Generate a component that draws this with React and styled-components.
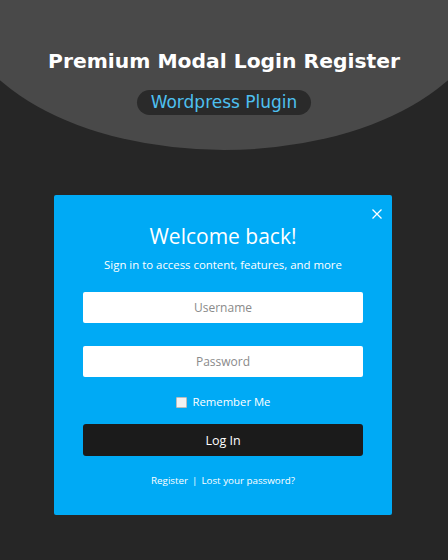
import React from 'react'
import styled, { createGlobalStyle } from 'styled-components'

const GlobalStyle = createGlobalStyle`
  html, body {
    margin: 0;
    padding: 0;
    background: #262626;
  }
  body {
    font-family: 'Open Sans', 'Liberation Sans', sans-serif;
  }
`

const Page = styled.div`
  width: 448px;
  height: 560px;
  overflow: hidden;
  background: #262626;
  display: flex;
  flex-direction: column;
  align-items: center;
`

const Hero = styled.header`
  flex: none;
  width: 530px;
  height: 150px;
  background: #494949;
  border-radius: 0 0 50% 50% / 0 0 100% 100%;
  display: flex;
  flex-direction: column;
  align-items: center;
  padding-top: 47px;
  box-sizing: border-box;
`

const Title = styled.h1`
  margin: 0;
  font-family: 'DejaVu Sans', 'Liberation Sans', sans-serif;
  font-weight: bold;
  font-size: 20.3px;
  line-height: 28px;
  color: #fff;
`

const Pill = styled.div`
  margin-top: 15px;
  height: 25px;
  padding: 0 14px;
  border-radius: 13px;
  background: #2a2a2a;
  color: #4ec0f0;
  font-family: 'DejaVu Sans', 'Liberation Sans', sans-serif;
  font-size: 17px;
  line-height: 25px;
`

const Modal = styled.div`
  align-self: flex-start;
  margin: 45px 0 0 54px;
  width: 338px;
  height: 320px;
  box-sizing: border-box;
  background: #00aaf5;
  border-radius: 2px;
  position: relative;
  display: flex;
  flex-direction: column;
  align-items: center;
  padding: 25px 29px 0;
  color: #fff;
`

const Close = styled.button`
  position: absolute;
  top: 12px;
  right: 8px;
  width: 14px;
  height: 14px;
  padding: 0;
  border: 0;
  background: none;
  cursor: pointer;
  svg {
    display: block;
  }
`

const Heading = styled.h2`
  margin: 0;
  font-weight: 400;
  font-size: 21px;
  line-height: 32px;
`

const Sub = styled.p`
  margin: 5px 0 0;
  font-size: 11.4px;
  line-height: 16px;
`

const Form = styled.form`
  width: 100%;
  display: flex;
  flex-direction: column;
  align-items: center;
  margin-top: 19px;
`

const Input = styled.input`
  width: 100%;
  height: 31px;
  box-sizing: border-box;
  border: 0;
  border-radius: 2px;
  background: #fff;
  margin-bottom: ${(p) => p.$gap}px;
  font-family: inherit;
  font-size: 12px;
  text-align: center;
  color: #333;
  &::placeholder {
    color: #8a8a8a;
  }
`

const Remember = styled.label`
  display: flex;
  align-items: center;
  gap: 6px;
  font-size: 11.3px;
  line-height: 16px;
`

const Box = styled.span`
  width: 9px;
  height: 9px;
  background: #f2f2f2;
  border: 1px solid #bdbdbd;
  border-radius: 1px;
`

const Submit = styled.button`
  margin-top: 14px;
  width: 100%;
  height: 32px;
  border: 0;
  border-radius: 3px;
  background: #1b1b1b;
  color: #fff;
  font-family: inherit;
  font-size: 12.5px;
  cursor: pointer;
`

const Links = styled.div`
  margin-top: 17px;
  font-size: 9.8px;
  line-height: 16px;
  a {
    color: #fff;
    text-decoration: none;
  }
  span {
    margin: 0 4px;
  }
`

export default function App() {
  return (
    <Page>
      <GlobalStyle />
      <Hero>
        <Title>Premium Modal Login Register</Title>
        <Pill>Wordpress Plugin</Pill>
      </Hero>
      <Modal>
        <Close aria-label='Close'>
          <svg width='14' height='14' viewBox='0 0 14 14'>
            <path d='M2.5 2.5 L11.5 11.5 M11.5 2.5 L2.5 11.5' stroke='#fff' strokeWidth='1.3' />
          </svg>
        </Close>
        <Heading>Welcome back!</Heading>
        <Sub>Sign in to access content, features, and more</Sub>
        <Form onSubmit={(e) => e.preventDefault()}>
          <Input placeholder='Username' $gap={23} />
          <Input placeholder='Password' type='password' $gap={17} />
          <Remember>
            <Box />
            Remember Me
          </Remember>
          <Submit>Log In</Submit>
          <Links>
            <a href='#'>Register</a>
            <span>|</span>
            <a href='#'>Lost your password?</a>
          </Links>
        </Form>
      </Modal>
    </Page>
  )
}
